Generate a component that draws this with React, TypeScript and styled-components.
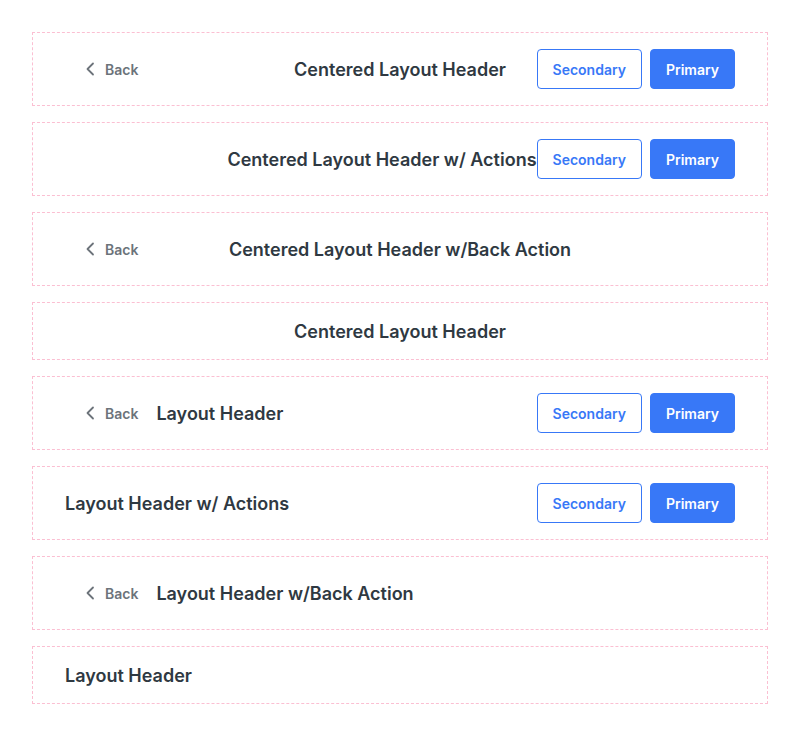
import styled, { createGlobalStyle } from "styled-components";

const GlobalStyle = createGlobalStyle`
  body {
    margin: 0;
    background: #fff;
    font-family: Inter, "Noto Sans", sans-serif;
    -webkit-font-smoothing: antialiased;
  }
`;

const Page = styled.div`
  display: grid;
  gap: 16px;
  padding: 32px;
`;

const Panel = styled.div<{ centered?: boolean }>`
  border: 1px dashed #fbbfd2;
  padding: 16px 32px;
  min-height: 24px;
  display: ${({ centered }) => (centered ? "grid" : "flex")};
  grid-template-columns: 1fr auto 1fr;
  align-items: center;
`;

const Side = styled.div<{ end?: boolean }>`
  display: flex;
  align-items: center;
  justify-content: ${({ end }) => (end ? "flex-end" : "flex-start")};
`;

const Title = styled.h1`
  margin: 0;
  padding-top: 1px;
  font-size: 18px;
  line-height: 23px;
  font-weight: 600;
  color: #2f3942;
  white-space: nowrap;
`;

const Spacer = styled.div`
  flex: 1;
`;

const BackBtn = styled.button`
  display: flex;
  align-items: center;
  gap: 8px;
  height: 40px;
  padding: 0 18px 0 16px;
  border: 0;
  background: none;
  color: #6c737a;
  font-family: inherit;
  font-size: 14px;
  font-weight: 600;
  cursor: pointer;
`;

const Actions = styled.div`
  display: flex;
  gap: 8px;
`;

const Btn = styled.button<{ primary?: boolean }>`
  height: 40px;
  padding: 0 15px;
  border-radius: 4px;
  border: 1px solid #3878f7;
  background: ${({ primary }) => (primary ? "#3878f7" : "#fff")};
  color: ${({ primary }) => (primary ? "#fff" : "#3878f7")};
  font-family: inherit;
  font-size: 14px;
  font-weight: 600;
  cursor: pointer;
`;

function Back() {
  return (
    <BackBtn type="button">
      <svg width="16" height="16" viewBox="0 0 16 16" fill="none">
        <path
          d="M12 2.5L6.5 8l5.5 5.5"
          stroke="currentColor"
          strokeWidth="1.8"
          strokeLinecap="round"
          strokeLinejoin="round"
        />
      </svg>
      Back
    </BackBtn>
  );
}

function Buttons() {
  return (
    <Actions>
      <Btn type="button">Secondary</Btn>
      <Btn type="button" primary>
        Primary
      </Btn>
    </Actions>
  );
}

function Centered({
  title,
  back,
  actions,
}: {
  title: string;
  back?: boolean;
  actions?: boolean;
}) {
  return (
    <Panel centered>
      <Side>{back && <Back />}</Side>
      <Title>{title}</Title>
      <Side end>{actions && <Buttons />}</Side>
    </Panel>
  );
}

function Plain({
  title,
  back,
  actions,
}: {
  title: string;
  back?: boolean;
  actions?: boolean;
}) {
  return (
    <Panel>
      {back && <Back />}
      <Title>{title}</Title>
      <Spacer />
      {actions && <Buttons />}
    </Panel>
  );
}

export default function App() {
  return (
    <>
      <GlobalStyle />
      <Page>
        <Centered title="Centered Layout Header" back actions />
        <Centered title="Centered Layout Header w/ Actions" actions />
        <Centered title="Centered Layout Header w/Back Action" back />
        <Centered title="Centered Layout Header" />
        <Plain title="Layout Header" back actions />
        <Plain title="Layout Header w/ Actions" actions />
        <Plain title="Layout Header w/Back Action" back />
        <Plain title="Layout Header" />
      </Page>
    </>
  );
}
